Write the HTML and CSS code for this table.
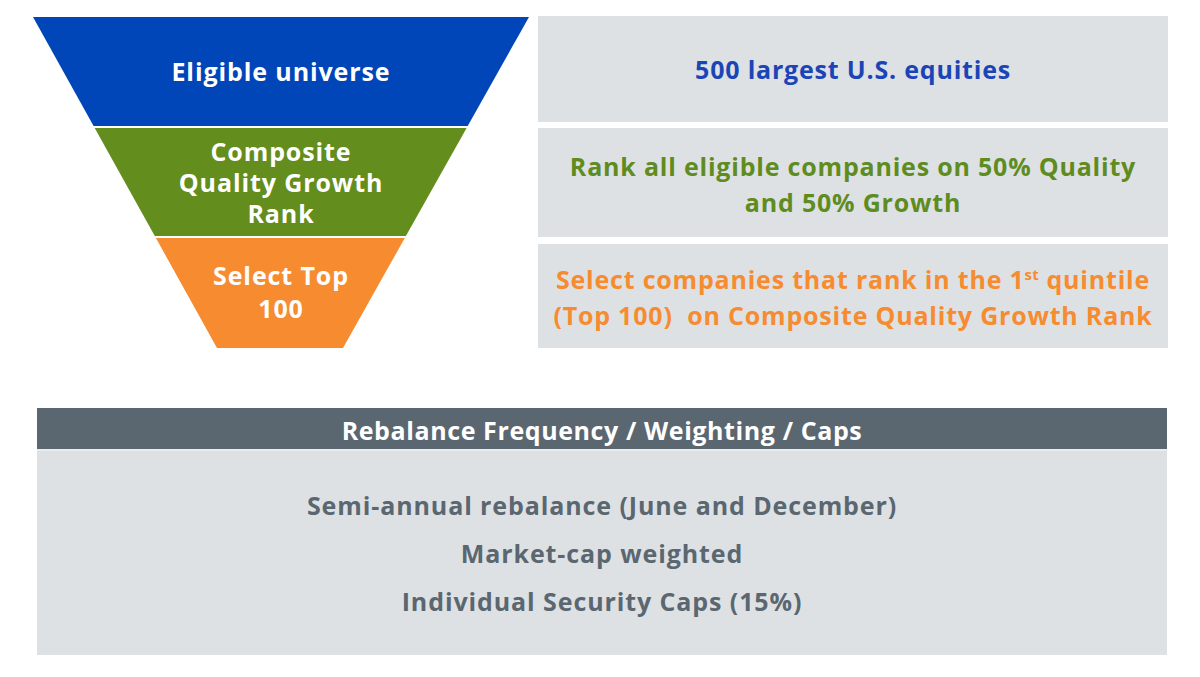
FILE: index.html
```html
<!DOCTYPE html>
<html lang="en">
<head>
<meta charset="utf-8">
<title>Quality Growth Index Methodology</title>
<link rel="stylesheet" href="styles.css">
</head>
<body>
<main class="page">
  <section class="top">
    <div class="funnel">
      <div class="layer layer-blue"><span>Eligible universe</span></div>
      <div class="layer layer-green"><span>Composite<br>Quality Growth<br>Rank</span></div>
      <div class="layer layer-orange"><span>Select Top<br>100</span></div>
    </div>
    <div class="steps">
      <div class="step step-blue"><span>500 largest U.S. equities</span></div>
      <div class="step step-green"><span>Rank all eligible companies on 50% Quality<br>and 50% Growth</span></div>
      <div class="step step-orange"><span>Select companies that rank in the 1<sup>st</sup> quintile<br>(Top 100)&nbsp; on Composite Quality Growth Rank</span></div>
    </div>
  </section>
  <section class="rules">
    <div class="rules-head">Rebalance Frequency / Weighting / Caps</div>
    <div class="rules-body">
      <p>Semi-annual rebalance (June and December)</p>
      <p>Market-cap weighted</p>
      <p>Individual Security Caps (15%)</p>
    </div>
  </section>
</main>
</body>
</html>
```
FILE: styles.css
```css
* { box-sizing: border-box; }
html, body { margin: 0; padding: 0; background: #ffffff; }
body {
  font-family: "Open Sans", "Noto Sans", sans-serif;
  font-weight: 700;
  width: 1200px;
  height: 677px;
  overflow: hidden;
}
.page {
  padding-top: 16px;
}
.top {
  display: flex;
  align-items: flex-start;
}
.funnel {
  margin-left: 33px;
  margin-top: 1px;
  width: 496px;
  display: flex;
  flex-direction: column;
  gap: 2px;
}
.layer {
  display: flex;
  align-items: center;
  justify-content: center;
  text-align: center;
  color: #ffffff;
  font-size: 25px;
  letter-spacing: 0.9px;
  white-space: nowrap;
}
.layer-blue {
  height: 109px;
  background: #0046b8;
  clip-path: polygon(0 0, 496px 0, 434.7px 100%, 60.6px 100%);
  line-height: 1;
}
.layer-green {
  height: 108px;
  background: #638d1c;
  clip-path: polygon(61.7px 0, 433.6px 0, 372.9px 100%, 121.8px 100%);
  line-height: 31px;
  padding-top: 1px;
}
.layer-orange {
  height: 110px;
  background: #f68c2f;
  clip-path: polygon(122.9px 0, 371.8px 0, 310px 100%, 184px 100%);
  line-height: 33px;
  padding-bottom: 2px;
}
.steps {
  margin-left: 9px;
  width: 630px;
  display: flex;
  flex-direction: column;
}
.step {
  background: #dee1e4;
  display: flex;
  align-items: center;
  justify-content: center;
  text-align: center;
  font-size: 25px;
  letter-spacing: 0.8px;
  line-height: 36px;
  white-space: nowrap;
}
.step-blue { height: 106px; color: #1b45b6; }
.step-green { height: 109px; margin-top: 6px; color: #5f8c1f; padding-top: 2px; }
.step-orange { height: 104px; margin-top: 7px; color: #f68c2f; padding-top: 2px; }
.step sup {
  font-size: 15px;
  line-height: 0;
  vertical-align: 9px;
  letter-spacing: 0.3px;
}
.rules {
  margin: 60px 0 0 37px;
  width: 1130px;
}
.rules-head {
  height: 43px;
  background: #5b6770;
  color: #ffffff;
  font-size: 25px;
  letter-spacing: 0.6px;
  display: flex;
  align-items: center;
  justify-content: center;
  border-bottom: 2px solid #e9ebed;
  padding-top: 2px;
}
.rules-body {
  height: 204px;
  background: #dee1e4;
  color: #5b6770;
  font-size: 25px;
  letter-spacing: 0.9px;
  display: flex;
  flex-direction: column;
  align-items: center;
  justify-content: center;
  gap: 16px;
}
.rules-body p {
  margin: 0;
  line-height: 32px;
}
```
